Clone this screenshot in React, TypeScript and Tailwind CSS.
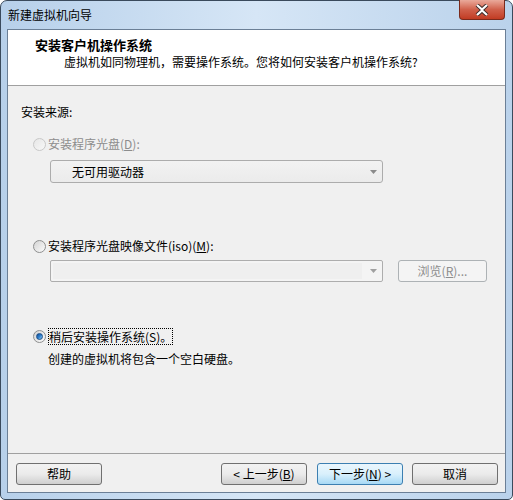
import React from 'react'

const FONT = { fontFamily: '"Noto Sans CJK SC", "Noto Sans", sans-serif' }

function Radio({ checked, disabled }: { checked?: boolean; disabled?: boolean }) {
  return (
    <span
      className={`relative w-[13px] h-[13px] rounded-full border flex items-center justify-center flex-shrink-0 ${
        disabled
          ? 'border-[#c8c8c8] bg-gradient-to-br from-[#e6e6e6] to-[#f8f8f8]'
          : 'border-[#8e8f8f] bg-gradient-to-br from-[#d4d4d4] to-[#fbfbfb]'
      }`}
    >
      {checked && (
        <span className="w-[7px] h-[7px] rounded-full bg-gradient-to-br from-[#0e4d94] via-[#2f7fce] to-[#8bd3f7] border border-[#1b4d86]" />
      )}
    </span>
  )
}

function Arrow({ color = '#8a8a8a' }: { color?: string }) {
  return (
    <svg width="7" height="4" viewBox="0 0 7 4">
      <path d="M0 0h7L3.5 4z" fill={color} />
    </svg>
  )
}

function Btn({ children, focus }: { children: React.ReactNode; focus?: boolean }) {
  return (
    <button
      className={`w-[86px] h-[22px] rounded-[3px] border text-[12px] leading-none flex items-center justify-center ${
        focus
          ? 'border-[#3c7fb1] bg-gradient-to-b from-[#eaf6fd] via-[#d9f0fc] to-[#a7d9f5]'
          : 'border-[#707070] bg-gradient-to-b from-[#f2f2f2] via-[#ebebeb] to-[#cfcfcf]'
      } text-black`}
    >
      {children}
    </button>
  )
}

export default function App() {
  return (
    <div className="w-[513px] h-[500px] relative" style={FONT}>
      <div className="w-full h-full rounded-t-[7px] rounded-b-[5px] border border-[#3a4a5c] bg-gradient-to-r from-[#b7d0ea] via-[#d6e6f6] to-[#bad2eb] px-[6px] pb-[6px] flex flex-col">
        {/* title bar */}
        <div className="h-[28px] flex items-center pl-[1px] text-[12px] text-black">新建虚拟机向导</div>

        {/* client */}
        <div className="flex-1 border border-[#6b7f96] bg-[#f0f0f0] flex flex-col">
          <div className="h-[56px] bg-white border-b border-[#a0a0a0]">
            <div className="pl-[27px] pt-[6px] text-[13px] leading-[18px] font-bold text-black">安装客户机操作系统</div>
            <div className="pl-[56px] text-[12px] leading-[16px] text-black">
              虚拟机如同物理机，需要操作系统。您将如何安装客户机操作系统?
            </div>
          </div>

          <div className="flex-1 pl-[13px] pt-[18px] text-[12px] leading-[16px] text-black">
            <div>安装来源:</div>

            <div className="mt-[16px] ml-[12px] flex items-center gap-[2px] text-[#8d8d8d]">
              <Radio disabled />
              <span>
                安装程序光盘(<span className="underline">D</span>):
              </span>
            </div>
            <div className="mt-[8px] ml-[29px] w-[333px] h-[23px] rounded-[3px] border border-[#acacac] bg-gradient-to-b from-[#f2f2f2] to-[#ebebeb] flex items-center pl-[21px] pr-[5px]">
              <span className="flex-1">无可用驱动器</span>
              <Arrow />
            </div>

            <div className="mt-[55px] ml-[12px] flex items-center gap-[2px]">
              <Radio />
              <span>
                安装程序光盘映像文件(iso)(<span className="underline">M</span>):
              </span>
            </div>
            <div className="mt-[6px] ml-[29px] flex items-center">
              <div className="w-[333px] h-[22px] rounded-[2px] border border-[#adadad] bg-[#f4f4f4] flex items-center p-[2px] pr-[5px]">
                <div className="w-[309px] h-full bg-[#efefef]" />
                <span className="ml-auto">
                  <Arrow color="#a0a0a0" />
                </span>
              </div>
              <div className="ml-[15px] w-[89px] h-[22px] rounded-[3px] border border-[#adb2b5] bg-[#f4f4f4] flex items-center justify-center text-[#8d8d8d]">
                浏览(<span className="underline">R</span>)...
              </div>
            </div>

            <div className="mt-[46px] ml-[12px] flex items-center gap-[2px]">
              <Radio checked />
              <span className="border border-dotted border-black leading-[15px]">稍后安装操作系统(S)。</span>
            </div>
            <div className="mt-[6px] ml-[27px]">创建的虚拟机将包含一个空白硬盘。</div>
          </div>

          <div className="border-t border-[#a0a0a0] pt-[9px] pb-[7px] pl-[8px] pr-[7px] flex items-center">
            <Btn>帮助</Btn>
            <div className="ml-auto flex">
              <Btn>
                &lt; 上一步(<span className="underline">B</span>)
              </Btn>
              <div className="ml-[10px]">
                <Btn focus>
                  下一步(<span className="underline">N</span>) &gt;
                </Btn>
              </div>
              <div className="ml-[9px]">
                <Btn>取消</Btn>
              </div>
            </div>
          </div>
        </div>
      </div>

      {/* close button */}
      <div className="absolute top-0 right-[8px] w-[46px] h-[20px] rounded-b-[4px] border border-t-0 border-[#7a2a1c] bg-gradient-to-b from-[#e9a99b] via-[#d0604b] to-[#c13b22] flex items-center justify-center">
        <svg width="14" height="12" viewBox="0 0 14 12">
          <path d="M2 1l5 4.5L12 1M2 11l5-4.5 5 4.5" stroke="#3a2a28" strokeWidth="4" fill="none" />
          <path d="M2 1l5 4.5L12 1M2 11l5-4.5 5 4.5" stroke="#ffffff" strokeWidth="2.2" fill="none" />
        </svg>
      </div>
    </div>
  )
}
